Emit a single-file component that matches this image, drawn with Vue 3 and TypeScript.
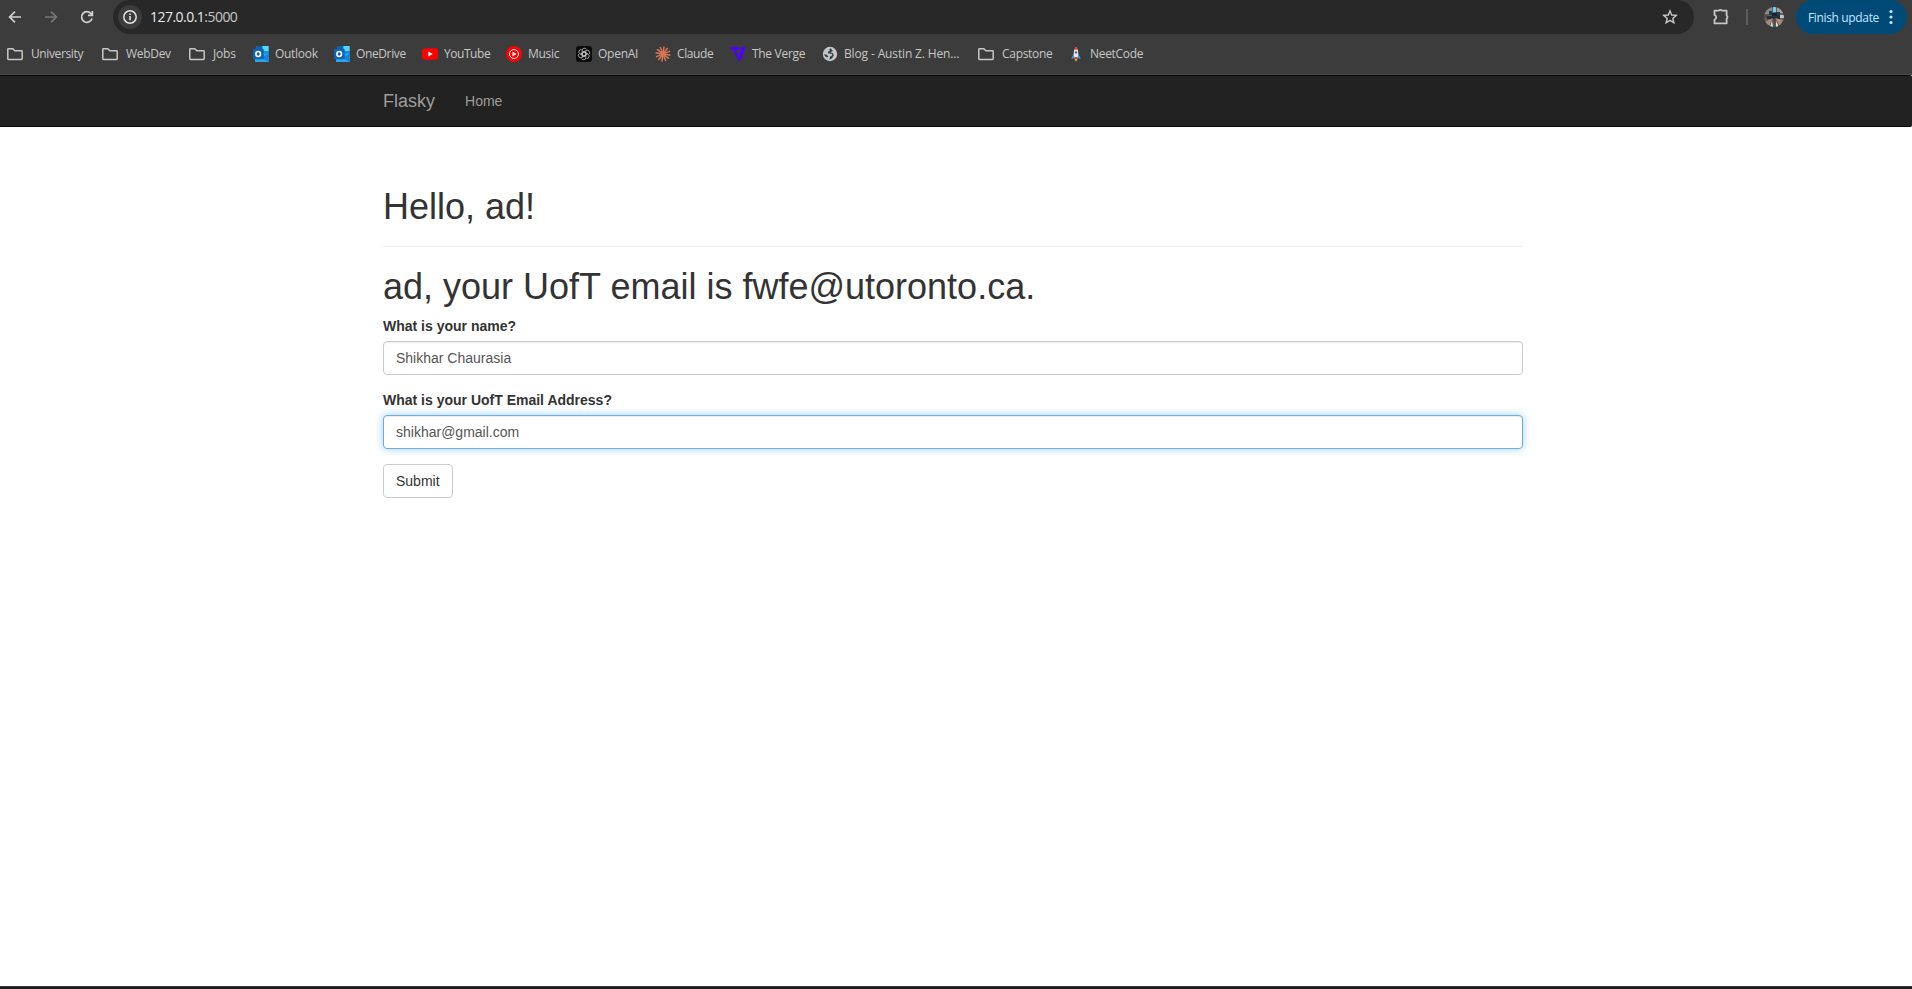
<script setup lang="ts">
import { ref } from 'vue'

interface Bookmark {
  label: string
  icon: string
  width: number
  spacing: number
}

const bookmarks: Bookmark[] = [
  { label: 'University', icon: 'folder', width: 95, spacing: -0.38 },
  { label: 'WebDev', icon: 'folder', width: 87, spacing: -0.3 },
  { label: 'Jobs', icon: 'folder', width: 66, spacing: -0.2 },
  { label: 'Outlook', icon: 'outlook', width: 81, spacing: -0.3 },
  { label: 'OneDrive', icon: 'outlook', width: 88, spacing: -0.38 },
  { label: 'YouTube', icon: 'youtube', width: 84, spacing: -0.45 },
  { label: 'Music', icon: 'music', width: 70, spacing: -0.3 },
  { label: 'OpenAI', icon: 'openai', width: 79, spacing: -0.25 },
  { label: 'Claude', icon: 'claude', width: 75, spacing: -0.38 },
  { label: 'The Verge', icon: 'verge', width: 92, spacing: -0.3 },
  { label: 'Blog - Austin Z. Hen...', icon: 'globe', width: 154, spacing: -0.14 },
  { label: 'Capstone', icon: 'folder', width: 92, spacing: -0.3 },
  { label: 'NeetCode', icon: 'rocket', width: 80, spacing: -0.3 },
]

const rays: number[] = Array.from({ length: 12 }, (_, i) => i * 30 + 8)
const petals: number[] = [0, 60, 120, 180, 240, 300]
const name = ref('Shikhar Chaurasia')
const email = ref('shikhar@gmail.com')
</script>

<template>
  <div class="window">
    <header class="chrome">
      <div class="toolbar">
        <div class="nav-buttons">
          <svg width="16" height="16" viewBox="0 0 16 16" class="stroke"><path d="M14 8H2.8M8 2.6 2.6 8 8 13.4" /></svg>
          <svg width="16" height="16" viewBox="0 0 16 16" class="stroke dim"><path d="M2 8h11.2M8 2.6 13.4 8 8 13.4" /></svg>
          <svg width="16" height="16" viewBox="0 0 16 16" class="stroke"><path d="M13 9.4A5.3 5.3 0 1 1 12 4.6L13.2 6M13.4 2v4.4H9" /></svg>
        </div>
        <div class="omnibox">
          <span class="site-info">
            <svg width="16" height="16" viewBox="0 0 16 16"><circle cx="8" cy="8" r="6.2" fill="none" stroke="#e3e3e3" stroke-width="1.5" /><path d="M7.2 7h1.6v4.3H7.2zM7.2 4.6h1.6v1.5H7.2z" fill="#e3e3e3" /></svg>
          </span>
          <span class="url">127.0.0.1<span class="port">:5000</span></span>
          <svg class="star" width="16" height="16" viewBox="0 0 16 16"><path d="M8 1.9 9.7 6l4.6.4-3.5 3 1.1 4.4L8 11.4l-3.9 2.4 1.1-4.4-3.5-3L6.3 6z" fill="none" stroke="#c7c7c7" stroke-width="1.4" /></svg>
        </div>
        <svg class="puzzle" width="18" height="18" viewBox="0 0 18 18"><path d="M2.5 2.6h4.4a1.7 1.3 0 0 1 3 0H14.6V7.5a1.4 1.6 0 0 1 0 3V15.4H2.5v-3.9a2.4 2.4 0 0 0 0-4.6z" fill="none" stroke="#c7c7c7" stroke-width="1.8" stroke-linejoin="round" /></svg>
        <span class="divider"></span>
        <svg class="avatar" width="20" height="20" viewBox="0 0 20 20">
          <defs><clipPath id="face"><circle cx="10" cy="10" r="10" /></clipPath></defs>
          <g clip-path="url(#face)">
            <path d="M0 0h20v20H0z" fill="#596068" />
            <path d="M0 0h8v7H0z" fill="#8b8c87" /><path d="M13 0h7v6h-7z" fill="#a59f92" />
            <path d="M9 0h3v5H9z" fill="#6fd0ee" /><path d="M5 4h3v4H5zM12 5h4v5h-4z" fill="#253a4b" />
            <path d="M0 8h4v3H0z" fill="#763f3b" /><path d="M8 6h5v6H8z" fill="#192431" /><path d="M3 9h13v3H3z" fill="#26303a" />
            <path d="m9 11-8 4 4 4zM11 11l8 2-3 6z" fill="#a88b72" />
            <path d="m8 14-2 6h3zM12 14l3 6h-3z" fill="#e4ded2" /><path d="m9 12 2 8 1-8z" fill="#5d4538" />
            <path d="M16 8h4v3h-4z" fill="#c8c5ba" />
          </g>
        </svg>
        <button class="update">
          <span>Finish update</span>
          <svg width="4" height="16" viewBox="0 0 4 16" fill="#c2e7ff"><circle cx="2" cy="2.5" r="1.6" /><circle cx="2" cy="8" r="1.6" /><circle cx="2" cy="13.5" r="1.6" /></svg>
        </button>
      </div>

      <nav class="bookmarks">
        <a v-for="b in bookmarks" :key="b.label" class="bookmark" :style="{ width: b.width + 'px' }">
          <svg v-if="b.icon === 'folder'" width="20" height="16" viewBox="0 0 20 16"><path d="M2.8 3.4q0-.7.7-.7h4.3L9.9 4.8h6.6q.7 0 .7.7v7.2q0 .7-.7.7h-13q-.7 0-.7-.7z" fill="none" stroke="#c7c7c7" stroke-width="1.5" /></svg>
          <svg v-else-if="b.icon === 'outlook'" width="16" height="16" viewBox="0 0 16 16">
            <path d="M3.5 0h12v8h-12z" fill="#28a8ea" /><path d="M3.5 0h6v4h-6z" fill="#0864a8" /><path d="M9.5 0h6v5h-6z" fill="#50d9ff" /><path d="M9.5 5h6v4h-6z" fill="#1490df" />
            <path d="M2 7.8h14V16H2z" fill="#28a8ea" /><path d="m8 12 8-4.5V16z" fill="#1784d8" />
            <rect y="2.7" width="10.7" height="10.6" rx="1" fill="#0f62b8" />
            <ellipse cx="5.2" cy="8" rx="2.3" ry="2.5" fill="none" stroke="#fff" stroke-width="1.6" />
          </svg>
          <svg v-else-if="b.icon === 'youtube'" width="16" height="16" viewBox="0 0 16 16"><rect y="2.3" width="16" height="11.5" rx="3" fill="#f00" /><path d="m6.3 5.6 4.4 2.4-4.4 2.5z" fill="#fff" /></svg>
          <svg v-else-if="b.icon === 'music'" width="16" height="16" viewBox="0 0 16 16"><circle cx="8" cy="8" r="8" fill="#f00" /><circle cx="8" cy="8" r="4.5" fill="none" stroke="#fff" stroke-width="1" /><path d="m6.5 5.6 4 2.4-4 2.4z" fill="#fff" /></svg>
          <svg v-else-if="b.icon === 'openai'" width="16" height="16" viewBox="0 0 16 16">
            <rect width="16" height="16" rx="3" fill="#0b0b0b" />
            <g fill="none" stroke="#e0e0e0" stroke-width=".65"><path v-for="p in petals" :key="p" d="M6.1 9.1V4.3A2.4 2.4 0 0 1 10.6 3.4M9.8 7 6.1 4.9" :transform="`rotate(${p} 8 8)`" /></g>
          </svg>
          <svg v-else-if="b.icon === 'claude'" width="16" height="16" viewBox="0 0 16 16"><g stroke="#d97757" stroke-width="1.5" stroke-linecap="round"><path v-for="r in rays" :key="r" d="M8 7V1" :transform="`rotate(${r} 8 8)`" /></g></svg>
          <svg v-else-if="b.icon === 'verge'" width="16" height="16" viewBox="0 0 16 16"><path d="M0 1h9.6v2.7H6.2l1.9 5L7 12 3.4 3.7H1.2zM12 1h4l-5.2 13.5H7.2z" fill="#4f00ff" /></svg>
          <svg v-else-if="b.icon === 'globe'" width="16" height="16" viewBox="0 0 16 16"><circle cx="8" cy="8" r="7.2" fill="#c4c7cc" /><path d="M8.7 2.2 7.2 3.6l.6 1.3-2 .9.5 1.7 3.2.2.8 1.5-2.2 1.3-.8 3 2.6-.9 1.9-3-1.1-2.7-2.6-.6 2.8-1.2zM1.7 8.2l3.2.6 1.5 1.7-1.4 1-1.6-1.1z" fill="#3c3c3c" /></svg>
          <svg v-else width="16" height="16" viewBox="0 0 16 16"><path d="m6 8-2.4 3.2v1.9L6 12zM10 8l2.4 3.2v1.9L10 12z" fill="#1d9bf0" /><path d="M8 1q-2.6 2.6-2.4 7l.8 4.5h3.2l.8-4.5Q10.6 3.6 8 1z" fill="#e8eef0" /><path d="M8 .6 6.2 3.7h3.6z" fill="#e8443a" /><circle cx="8" cy="6.4" r="1.2" fill="#44667a" /><path d="M6.5 11h3v2h-3z" fill="#d43d31" /><path d="m6.6 13 1.4 2.8L9.4 13z" fill="#ffb12b" /></svg>
          <span class="label" :style="{ letterSpacing: b.spacing + 'px' }">{{ b.label }}</span>
        </a>
      </nav>
    </header>

    <main class="page">
      <div class="navbar">
        <div class="container nav-inner">
          <a class="brand">Flasky</a>
          <a class="nav-link">Home</a>
        </div>
      </div>
      <div class="container content">
        <div class="page-header"><h1>Hello, ad!</h1></div>
        <h1>ad, your UofT email is fwfe@utoronto.ca.</h1>
        <form @submit.prevent>
          <div class="form-group">
            <label for="name">What is your name?</label>
            <input id="name" v-model="name" type="text" />
          </div>
          <div class="form-group">
            <label for="email">What is your UofT Email Address?</label>
            <input id="email" v-model="email" class="focused" type="text" />
          </div>
          <button class="submit" type="submit">Submit</button>
        </form>
      </div>
    </main>
    <div class="taskbar-edge"></div>
  </div>
</template>

<style>
body { margin: 0; overflow: hidden; }
</style>

<style scoped>
* { box-sizing: border-box; }
svg { display: block; flex: none; }
.window { display: flex; flex-direction: column; height: 989px; width: 1912px; background: #fff; }
.chrome { height: 75px; background: #3c3c3c; border-bottom: 1px solid #4c4c4c; font-family: "Open Sans", "Noto Sans", sans-serif; color: #c7c7c7; }
.toolbar { display: flex; align-items: center; height: 34px; }
.nav-buttons { display: flex; gap: 20px; padding-left: 7px; width: 113px; }
.stroke { fill: none; stroke: #d0d0d0; stroke-width: 1.7; }
.dim { stroke: #777; }
.omnibox { display: flex; align-items: center; width: 1581px; height: 34px; border-radius: 17px; background: #282828; padding: 0 16px 0 5px; }
.site-info { display: flex; align-items: center; justify-content: center; width: 24px; height: 24px; border-radius: 50%; background: #3c3c3c; }
.url { margin-left: 8px; font-size: 14px; letter-spacing: -0.53px; color: #e8e8e8; line-height: 20px; }
.port { color: #c7c7c7; }
.star { margin-left: auto; }
.puzzle { margin-left: 18px; }
.divider { width: 2px; height: 16px; margin-left: 16px; background: #5c5c5c; }
.avatar { margin-left: 16px; }
.update { display: flex; align-items: center; justify-content: space-between; width: 111px; height: 34px; margin-left: 12px; padding: 0 14px 0 12px; border: 0; border-radius: 17px; background: #004a77; color: #c2e7ff; font: 12px "Open Sans", "Noto Sans", sans-serif; letter-spacing: -0.35px; white-space: nowrap; }
.bookmarks { display: flex; padding: 12px 0 0 5px; }
.bookmark { display: flex; align-items: center; flex: none; height: 16px; gap: 6px; font-size: 12px; line-height: 16px; white-space: nowrap; }
.page { flex: 1; font-family: "Liberation Sans", Arial, sans-serif; font-size: 14px; line-height: 20px; color: #333; }
.navbar { height: 52px; background: #222; border: 1px solid #080808; border-width: 1px 0; border-radius: 0 2px 2px 0; }
.container { width: 1170px; padding: 0 15px; margin-left: 368px; }
.nav-inner { display: flex; align-items: center; height: 50px; color: #9d9d9d; }
.brand { font-size: 18px; margin-right: 30px; }
.content { padding-top: 60px; }
.page-header { padding-bottom: 10px; margin-bottom: 20px; border-bottom: 1px solid #eee; }
h1 { margin: 0 0 10px; font-size: 36px; line-height: 39px; font-weight: 500; }
.form-group { margin-bottom: 15px; }
label { display: block; margin-bottom: 5px; font-weight: 700; }
input { display: block; width: 100%; height: 34px; padding: 6px 12px; font: 14px/20px "Liberation Sans", Arial, sans-serif; color: #555; background: #fff; border: 1px solid #ccc; border-radius: 4px; box-shadow: inset 0 1px 1px rgba(0, 0, 0, .075); outline: 0; }
.focused { border-color: #66afe9; box-shadow: inset 0 1px 1px rgba(0, 0, 0, .075), 0 0 8px rgba(102, 175, 233, .6); }
.submit { display: block; height: 34px; padding: 6px 12px; font: 14px/20px "Liberation Sans", Arial, sans-serif; color: #333; background: #fff; border: 1px solid #ccc; border-radius: 4px; }
.taskbar-edge { height: 3px; background: #1c1a1d; border-top: 1px solid #3a383b; }
</style>
